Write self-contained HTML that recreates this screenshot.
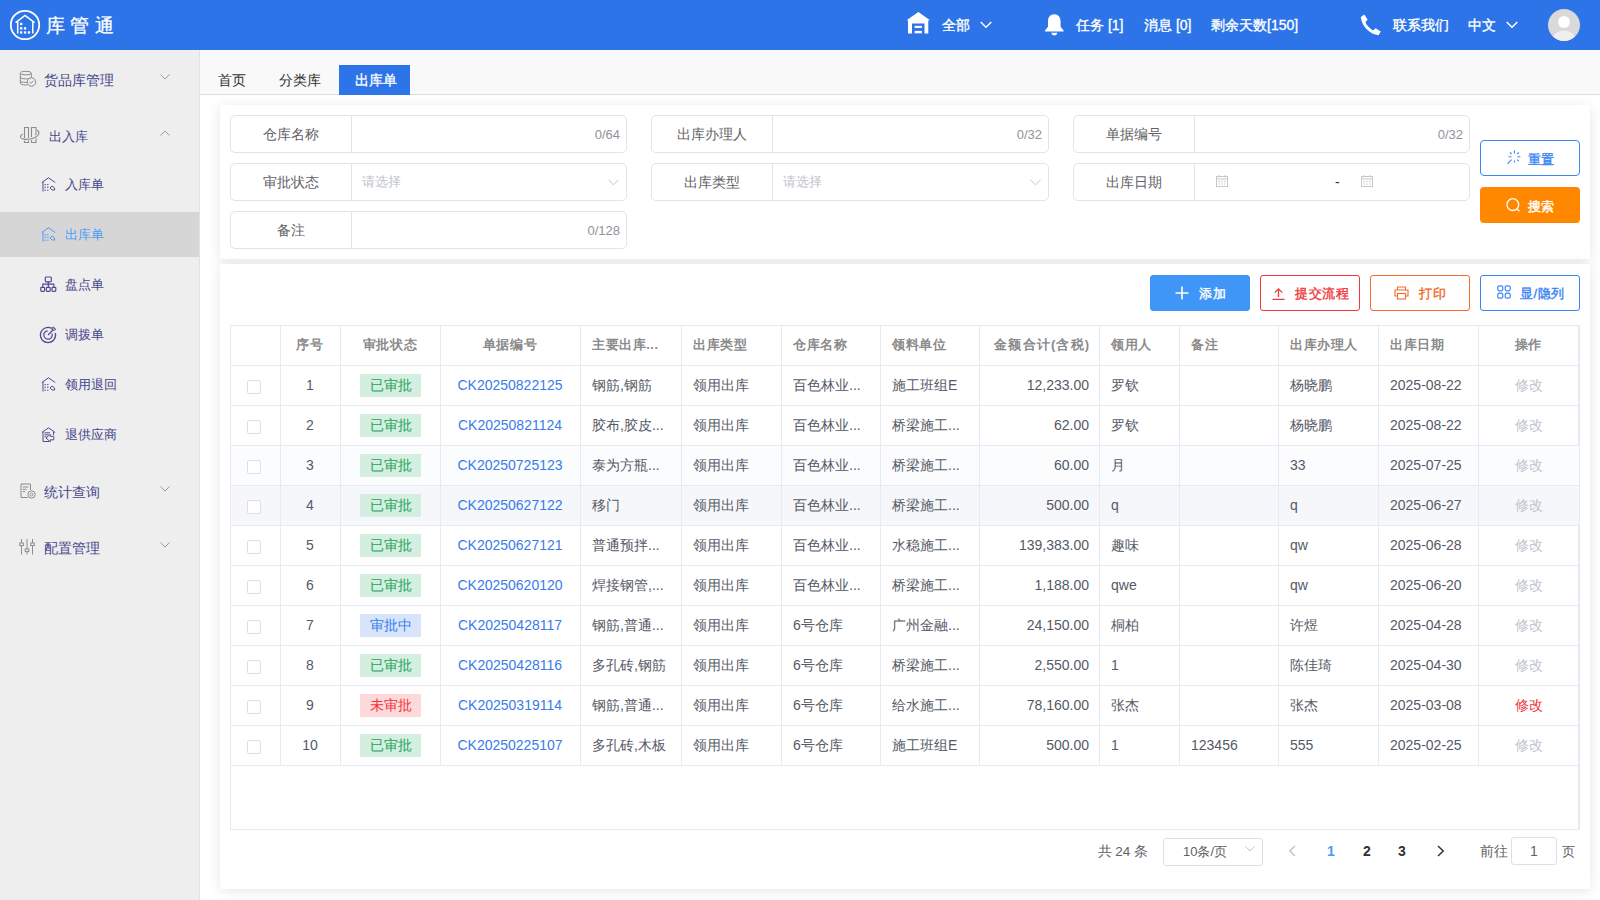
<!DOCTYPE html><html><head><meta charset="utf-8"><title>出库单</title><style>
*{box-sizing:border-box;margin:0;padding:0}
html,body{width:1600px;height:900px;overflow:hidden;background:#fff;font-family:"Liberation Sans",sans-serif;font-size:14px;color:#606266}
.a{position:absolute}
.t{position:absolute;white-space:nowrap}
svg{position:absolute;overflow:visible}
</style></head><body>
<div class="a" style="left:0;top:0;width:1600px;height:50px;background:#2d74e8"></div>
<svg style="left:0;top:0" width="130" height="50" viewBox="0 0 130 50">
<circle cx="25" cy="25" r="14.2" fill="none" stroke="#fff" stroke-width="1.8"/>
<path d="M15.6 22.6 L25 15.4 L34.6 22.6" fill="none" stroke="#fff" stroke-width="1.6" stroke-linejoin="miter"/>
<path d="M17.7 21.2 V33.6 M32.8 21.2 V33.6" fill="none" stroke="#fff" stroke-width="1.5"/>
<g fill="#fff"><rect x="20" y="22.8" width="2.3" height="2.3"/><rect x="20" y="27.2" width="2.3" height="2.3"/><rect x="23.9" y="27.2" width="2.3" height="2.3"/>
<rect x="20" y="31.3" width="2.3" height="2.3"/><rect x="23.9" y="31.3" width="2.3" height="2.3"/><rect x="27.8" y="31.3" width="2.3" height="2.3"/></g>
</svg>
<div class="t" style="left:45.5px;top:10.8px;height:30px;line-height:30px;font-size:19px;letter-spacing:5.8px;color:#fff;-webkit-text-stroke:0.3px #fff">库管通</div>
<svg style="left:902px;top:8px" width="32" height="32" viewBox="0 0 32 32">
<path d="M4.6 12.3 L16.4 4.1 L28.1 12.3 L26.3 12.3 V25.5 H22.5 V15.6 H10 V25.5 H6 V12.3 Z" fill="#fff"/>
<rect x="12.6" y="17.8" width="7.3" height="2.2" fill="#fff"/><rect x="12.6" y="22.9" width="7.3" height="2.4" fill="#fff"/>
</svg>
<div class="t" style="left:942px;color:#fff;font-size:14px;-webkit-text-stroke:0.35px #fff;height:50px;line-height:50px;top:0">全部</div>
<svg style="left:980px;top:21px" width="12" height="8" viewBox="0 0 12 8"><path d="M0.7 1 L6 6.3 L11.3 1" fill="none" stroke="#fff" stroke-width="1.5"/></svg>
<svg style="left:1044px;top:14px" width="21" height="22" viewBox="0 0 21 22">
<path d="M10.2 0.3 C6.3 0.3 4 3.4 4 7.3 V12.8 L1 16.4 V17.6 H19.6 V16.4 L16.6 12.8 V7.3 C16.6 3.4 14.2 0.3 10.2 0.3 Z" fill="#fff"/>
<path d="M7.3 18.8 C7.6 20.6 8.8 21.6 10.3 21.6 C11.8 21.6 13 20.6 13.3 18.8 Z" fill="#fff"/>
</svg>
<div class="t" style="left:1076px;color:#fff;font-size:14px;-webkit-text-stroke:0.35px #fff;height:50px;line-height:50px;top:0">任务 [1]</div>
<div class="t" style="left:1144px;color:#fff;font-size:14px;-webkit-text-stroke:0.35px #fff;height:50px;line-height:50px;top:0">消息 [0]</div>
<div class="t" style="left:1211px;color:#fff;font-size:14px;-webkit-text-stroke:0.35px #fff;height:50px;line-height:50px;top:0">剩余天数[150]</div>
<svg style="left:1360px;top:14px" width="22" height="22" viewBox="0 0 22 22">
<path d="M4.2 0.6 L7.6 5.6 L5.4 8.2 C6.8 11.4 9.6 14.6 13 16.4 L15.6 14.2 L20.8 17.6 L18.6 21.2 C10 20.6 1.6 12.2 0.8 3 Z" fill="#fff"/>
</svg>
<div class="t" style="left:1393px;color:#fff;font-size:14px;-webkit-text-stroke:0.35px #fff;height:50px;line-height:50px;top:0">联系我们</div>
<div class="t" style="left:1468px;color:#fff;font-size:14px;-webkit-text-stroke:0.35px #fff;height:50px;line-height:50px;top:0">中文</div>
<svg style="left:1506px;top:21px" width="12" height="8" viewBox="0 0 12 8"><path d="M0.7 1 L6 6.3 L11.3 1" fill="none" stroke="#fff" stroke-width="1.5"/></svg>
<svg style="left:1548px;top:9px" width="32" height="32" viewBox="0 0 32 32">
<defs><clipPath id="av"><circle cx="16" cy="16" r="16"/></clipPath></defs>
<circle cx="16" cy="16" r="16" fill="#d9d9d9"/>
<g clip-path="url(#av)"><circle cx="16" cy="13" r="6" fill="#fff"/><ellipse cx="16" cy="30.5" rx="11.5" ry="9" fill="#efefef"/></g>
</svg>
<div class="a" style="left:0;top:50px;width:200px;height:850px;background:#eeeeee;border-right:1px solid #e2e2e2"></div>
<div class="a" style="left:0;top:212px;width:199px;height:45px;background:#d6d6d6"></div>
<svg style="left:19px;top:71px" width="18" height="16" viewBox="0 0 18 16">
<g fill="none" stroke="#8c8c8c" stroke-width="1">
<ellipse cx="6.8" cy="2.1" rx="5.5" ry="1.8"/>
<path d="M1.3 2.1 V12.2 C1.3 13.3 3.6 14 6.8 14 H8.6"/><path d="M12.3 2.1 V6.6"/>
<path d="M1.3 6.1 C1.3 7.2 3.6 7.9 6.8 7.9 C8.8 7.9 10.6 7.5 11.6 7"/>
<path d="M1.3 9.9 C1.3 11 3.6 11.4 6.8 11.4 H8.3"/>
<circle cx="12.5" cy="11" r="4.2" fill="#eeeeee"/>
<path d="M10.6 11 L12 12.4 L14.5 9.7"/>
</g>
</svg>
<div class="t" style="left:44px;top:65.7px;height:30px;line-height:30px;font-size:13.7px;color:#45458c">货品库管理</div>
<svg style="left:160px;top:74px" width="10" height="6" viewBox="0 0 10 6"><path d="M0.5 0.5 L5 5 L9.5 0.5" fill="none" stroke="#9a9a9a" stroke-width="1"/></svg>
<svg style="left:19px;top:126px" width="22" height="18" viewBox="0 0 22 18">
<g fill="none" stroke="#8c8c8c" stroke-width="1.1">
<path d="M5.5 1.5 H9.5 V16.5 H5.5 Z"/><path d="M12.5 1.5 H17 V16.5 H12.5 Z"/>
</g>
<path d="M3.7 8 C1 9.3 0.8 11.5 3 12.6 C6 14 12 13.5 16 11.5 C20 9.5 22 6.5 17.3 3.7" fill="none" stroke="#eeeeee" stroke-width="2.6"/>
<path d="M3.7 8 C1 9.3 0.8 11.5 3 12.6 C6 14 12 13.5 16 11.5 C20 9.5 22 6.5 17.3 3.7" fill="none" stroke="#8c8c8c" stroke-width="1.1"/>
</svg>
<div class="t" style="left:49.3px;top:121.5px;height:30px;line-height:30px;font-size:13.4px;color:#45458c">出入库</div>
<svg style="left:160px;top:130px" width="10" height="6" viewBox="0 0 10 6"><path d="M0.5 5.5 L5 1 L9.5 5.5" fill="none" stroke="#9a9a9a" stroke-width="1"/></svg>
<svg style="left:41px;top:177px" width="16" height="16" viewBox="0 0 16 16"><g fill="none" stroke="#4f4d8f" stroke-width="1"><path d="M0.8 5.5 L7.5 0.8 L14.2 5.5"/><path d="M2 4.7 V14.5"/></g><g fill="#4f4d8f"><rect x="3.6" y="7" width="1.2" height="1.2"/><rect x="6.2" y="7" width="1.2" height="1.2"/><rect x="3.6" y="9.7" width="1.2" height="1.2"/><rect x="6.2" y="9.7" width="1.2" height="1.2"/><rect x="3.6" y="12.6" width="1.2" height="1.2"/><rect x="6.2" y="12.6" width="1.2" height="1.2"/></g><g fill="none" stroke="#4f4d8f" stroke-width="1"><path d="M9 11 L11 9 L13.6 11 L13.6 13 L11 13 Z"/></g></svg>
<div class="t" style="left:65px;top:170px;height:30px;line-height:30px;font-size:13.4px;color:#45458c">入库单</div>
<svg style="left:41px;top:227px" width="16" height="16" viewBox="0 0 16 16"><g fill="none" stroke="#4a9cf8" stroke-width="1"><path d="M0.8 5.5 L7.5 0.8 L14.2 5.5"/><path d="M2 4.7 V14.5"/></g><g fill="#4a9cf8"><rect x="3.6" y="7" width="1.2" height="1.2"/><rect x="6.2" y="7" width="1.2" height="1.2"/><rect x="3.6" y="9.7" width="1.2" height="1.2"/><rect x="6.2" y="9.7" width="1.2" height="1.2"/><rect x="3.6" y="12.6" width="1.2" height="1.2"/><rect x="6.2" y="12.6" width="1.2" height="1.2"/></g><g fill="none" stroke="#4a9cf8" stroke-width="1"><path d="M9 11 L11 9 L13.6 11 L13.6 13 L11 13 Z"/></g></svg>
<div class="t" style="left:65px;top:220px;height:30px;line-height:30px;font-size:13.4px;color:#4a9cf8">出库单</div>
<svg style="left:40px;top:276px" width="17" height="17" viewBox="0 0 17 17"><g fill="none" stroke="#4f4d8f" stroke-width="1.2">
<rect x="5.3" y="1" width="6" height="4.8" rx="0.8"/><path d="M8.3 5.8 V11 M2.8 11 V8.2 H13.8 V11"/>
<rect x="0.8" y="11.3" width="3.8" height="4" rx="0.8"/><rect x="6.4" y="11.3" width="3.8" height="4" rx="0.8"/><rect x="12" y="11.3" width="3.8" height="4" rx="0.8"/>
</g></svg>
<div class="t" style="left:65px;top:270px;height:30px;line-height:30px;font-size:13.4px;color:#45458c">盘点单</div>
<svg style="left:39px;top:327px" width="18" height="17" viewBox="0 0 18 17"><g fill="none" stroke="#4f4d8f" stroke-width="1.25">
<path d="M12.8 1.4 A7.6 7.6 0 1 0 16.34 6.03"/><path d="M8.63 3.82 A4.2 4.2 0 1 0 12.95 6.56"/><path d="M9 8 L14.2 2.8"/>
<path d="M13.3 0.6 L13.1 3 L15.6 3.2 L16.8 2 L15 1.8 L14.9 0 Z" stroke-width="1"/>
</g></svg>
<div class="t" style="left:65px;top:320px;height:30px;line-height:30px;font-size:13.4px;color:#45458c">调拨单</div>
<svg style="left:41px;top:377px" width="16" height="16" viewBox="0 0 16 16"><g fill="none" stroke="#4f4d8f" stroke-width="1"><path d="M0.8 5.5 L7.5 0.8 L14.2 5.5"/><path d="M2 4.7 V14.5"/></g><g fill="#4f4d8f"><rect x="3.6" y="7" width="1.2" height="1.2"/><rect x="6.2" y="7" width="1.2" height="1.2"/><rect x="3.6" y="9.7" width="1.2" height="1.2"/><rect x="6.2" y="9.7" width="1.2" height="1.2"/><rect x="3.6" y="12.6" width="1.2" height="1.2"/><rect x="6.2" y="12.6" width="1.2" height="1.2"/></g><g fill="none" stroke="#4f4d8f" stroke-width="1"><path d="M9 11 L11 9 L13.6 11 L13.6 13 L11 13 Z"/></g></svg>
<div class="t" style="left:65px;top:370px;height:30px;line-height:30px;font-size:13.4px;color:#45458c">领用退回</div>
<svg style="left:41px;top:427px" width="16" height="16" viewBox="0 0 16 16"><g fill="none" stroke="#4f4d8f" stroke-width="1"><path d="M0.8 5.5 L7.5 0.8 L14.2 5.5"/><path d="M2 4.7 V14.5"/><path d="M3.5 5.8 H9 M3.5 7.8 H7.5 M3.5 9.8 H5.5 M2 14.5 H8 M12.5 5 V8"/><path d="M5 11 L9.3 7.3 V9.3 H12.8 V12.8 H9.3 V14.8 Z"/></g></svg>
<div class="t" style="left:65px;top:420px;height:30px;line-height:30px;font-size:13.4px;color:#45458c">退供应商</div>
<svg style="left:20px;top:483px" width="16" height="16" viewBox="0 0 16 16"><g fill="none" stroke="#8c8c8c" stroke-width="1">
<path d="M10.5 1 H1 V14.5 H7.5"/><path d="M10.5 1 V7"/><path d="M2.8 4 H8.5 M2.8 6.3 H6.5 M2.8 8.6 H5"/>
</g><circle cx="11.5" cy="11.5" r="3.7" fill="none" stroke="#8c8c8c" stroke-width="1"/><circle cx="11.5" cy="11.5" r="1.5" fill="none" stroke="#8c8c8c" stroke-width="0.9"/></svg>
<div class="t" style="left:44.3px;top:477.7px;height:30px;line-height:30px;font-size:13.7px;color:#45458c">统计查询</div>
<svg style="left:160px;top:486px" width="10" height="6" viewBox="0 0 10 6"><path d="M0.5 0.5 L5 5 L9.5 0.5" fill="none" stroke="#9a9a9a" stroke-width="1"/></svg>
<svg style="left:19px;top:539px" width="17" height="16" viewBox="0 0 17 16"><g fill="none" stroke="#8c8c8c" stroke-width="1">
<path d="M2.5 0 V15.5 M8 0 V15.5 M13.5 0 V15.5"/>
<rect x="0.8" y="4" width="3.6" height="2.6" fill="#eee"/><rect x="6.2" y="10" width="3.6" height="2.6" fill="#eee"/><rect x="11.7" y="4" width="3.6" height="2.6" fill="#eee"/>
</g></svg>
<div class="t" style="left:44.3px;top:533.7px;height:30px;line-height:30px;font-size:13.7px;color:#45458c">配置管理</div>
<svg style="left:160px;top:542px" width="10" height="6" viewBox="0 0 10 6"><path d="M0.5 0.5 L5 5 L9.5 0.5" fill="none" stroke="#9a9a9a" stroke-width="1"/></svg>
<div class="a" style="left:200px;top:50px;width:1400px;height:45px;background:#f9f9f9;border-bottom:1px solid #dedede"></div>
<div class="t" style="left:217.7px;top:65.7px;height:30px;line-height:30px;font-size:13.7px;color:#303133">首页</div>
<div class="t" style="left:279px;top:65.7px;height:30px;line-height:30px;font-size:13.7px;color:#303133">分类库</div>
<div class="a" style="left:339px;top:65px;width:71px;height:30px;background:#2d74e8"></div>
<div class="t" style="left:355px;top:65.8px;height:30px;line-height:30px;font-size:13.7px;color:#fff;-webkit-text-stroke:0.3px #fff">出库单</div>
<div class="a" style="left:220px;top:105px;width:1370px;height:154px;background:#fff;box-shadow:0 2px 12px rgba(0,0,0,0.10)"></div>
<div class="a" style="left:220px;top:264px;width:1370px;height:625px;background:#fff;box-shadow:0 2px 12px rgba(0,0,0,0.10)"></div>
<div class="a" style="left:230px;top:115px;width:397px;height:38px;border:1px solid #e3e4e8;border-radius:5px"></div>
<div class="a" style="left:351px;top:115px;width:1px;height:38px;background:#e3e4e8"></div>
<div class="t" style="left:230px;top:115px;width:121px;height:38px;line-height:38px;text-align:center;color:#606266">仓库名称</div>
<div class="t" style="left:351px;top:116px;width:269px;height:38px;line-height:38px;text-align:right;color:#909399;font-size:13px">0/64</div>
<div class="a" style="left:651px;top:115px;width:398px;height:38px;border:1px solid #e3e4e8;border-radius:5px"></div>
<div class="a" style="left:772px;top:115px;width:1px;height:38px;background:#e3e4e8"></div>
<div class="t" style="left:651px;top:115px;width:121px;height:38px;line-height:38px;text-align:center;color:#606266">出库办理人</div>
<div class="t" style="left:772px;top:116px;width:270px;height:38px;line-height:38px;text-align:right;color:#909399;font-size:13px">0/32</div>
<div class="a" style="left:1073px;top:115px;width:397px;height:38px;border:1px solid #e3e4e8;border-radius:5px"></div>
<div class="a" style="left:1194px;top:115px;width:1px;height:38px;background:#e3e4e8"></div>
<div class="t" style="left:1073px;top:115px;width:121px;height:38px;line-height:38px;text-align:center;color:#606266">单据编号</div>
<div class="t" style="left:1194px;top:116px;width:269px;height:38px;line-height:38px;text-align:right;color:#909399;font-size:13px">0/32</div>
<div class="a" style="left:230px;top:163px;width:397px;height:38px;border:1px solid #e3e4e8;border-radius:5px"></div>
<div class="a" style="left:351px;top:163px;width:1px;height:38px;background:#e3e4e8"></div>
<div class="t" style="left:230px;top:163px;width:121px;height:38px;line-height:38px;text-align:center;color:#606266">审批状态</div>
<div class="t" style="left:362px;top:163px;height:38px;line-height:38px;color:#c0c4cc;font-size:13px">请选择</div>
<svg style="left:608px;top:179px" width="11" height="7" viewBox="0 0 11 7"><path d="M0.5 0.8 L5.5 5.8 L10.5 0.8" fill="none" stroke="#c0c4cc" stroke-width="1"/></svg>
<div class="a" style="left:651px;top:163px;width:398px;height:38px;border:1px solid #e3e4e8;border-radius:5px"></div>
<div class="a" style="left:772px;top:163px;width:1px;height:38px;background:#e3e4e8"></div>
<div class="t" style="left:651px;top:163px;width:121px;height:38px;line-height:38px;text-align:center;color:#606266">出库类型</div>
<div class="t" style="left:783px;top:163px;height:38px;line-height:38px;color:#c0c4cc;font-size:13px">请选择</div>
<svg style="left:1030px;top:179px" width="11" height="7" viewBox="0 0 11 7"><path d="M0.5 0.8 L5.5 5.8 L10.5 0.8" fill="none" stroke="#c0c4cc" stroke-width="1"/></svg>
<div class="a" style="left:1073px;top:163px;width:397px;height:38px;border:1px solid #e3e4e8;border-radius:5px"></div>
<div class="a" style="left:1194px;top:163px;width:1px;height:38px;background:#e3e4e8"></div>
<div class="t" style="left:1073px;top:163px;width:121px;height:38px;line-height:38px;text-align:center;color:#606266">出库日期</div>
<svg style="left:1216px;top:175px" width="12" height="12" viewBox="0 0 12 12"><g fill="none" stroke="#c8c8c8" stroke-width="1">
<rect x="0.5" y="1.5" width="11" height="10"/><path d="M0.5 4 H11.5 M3 0 V2.5 M9 0 V2.5"/></g><g fill="#c8c8c8"><rect x="2.5" y="6" width="1.5" height="1"/><rect x="5.25" y="6" width="1.5" height="1"/><rect x="8" y="6" width="1.5" height="1"/><rect x="2.5" y="8.5" width="1.5" height="1"/><rect x="5.25" y="8.5" width="1.5" height="1"/><rect x="8" y="8.5" width="1.5" height="1"/></g></svg>
<svg style="left:1361px;top:175px" width="12" height="12" viewBox="0 0 12 12"><g fill="none" stroke="#c8c8c8" stroke-width="1">
<rect x="0.5" y="1.5" width="11" height="10"/><path d="M0.5 4 H11.5 M3 0 V2.5 M9 0 V2.5"/></g><g fill="#c8c8c8"><rect x="2.5" y="6" width="1.5" height="1"/><rect x="5.25" y="6" width="1.5" height="1"/><rect x="8" y="6" width="1.5" height="1"/><rect x="2.5" y="8.5" width="1.5" height="1"/><rect x="5.25" y="8.5" width="1.5" height="1"/><rect x="8" y="8.5" width="1.5" height="1"/></g></svg>
<div class="t" style="left:1335px;top:163px;height:38px;line-height:38px;color:#303133">-</div>
<div class="a" style="left:230px;top:211px;width:397px;height:38px;border:1px solid #e3e4e8;border-radius:5px"></div>
<div class="a" style="left:351px;top:211px;width:1px;height:38px;background:#e3e4e8"></div>
<div class="t" style="left:230px;top:211px;width:121px;height:38px;line-height:38px;text-align:center;color:#606266">备注</div>
<div class="t" style="left:351px;top:212px;width:269px;height:38px;line-height:38px;text-align:right;color:#909399;font-size:13px">0/128</div>
<div class="a" style="left:1480px;top:140px;width:100px;height:36px;border:1px solid #3a86f5;border-radius:4px;background:#fff"></div>
<svg style="left:1507px;top:150px" width="14" height="15" viewBox="0 0 14 15"><g stroke="#3a86f5" stroke-width="1.1" stroke-linecap="butt">
<path d="M7.4 0.6 V3.6 M7.4 10.4 V12.6 M1.4 6.8 H4.4 M10.4 6.8 H13.4 M4.6 4 L3 2.4 M10.2 4 L11.8 2.4 M10.2 9.6 L11.8 11.2 M4.6 9.6 L0.4 13.8"/></g></svg>
<div class="t" style="left:1527.5px;top:141.5px;height:36px;line-height:36px;font-size:13px;letter-spacing:0.55px;color:#3a86f5;-webkit-text-stroke:0.4px #3a86f5">重置</div>
<div class="a" style="left:1480px;top:187px;width:100px;height:36px;border-radius:4px;background:#ff8800"></div>
<svg style="left:1506px;top:198px" width="15" height="15" viewBox="0 0 15 15"><g fill="none" stroke="#fff" stroke-width="1.3">
<circle cx="6.8" cy="6.6" r="5.9"/><path d="M10.9 10.7 L13.4 13.2"/></g></svg>
<div class="t" style="left:1527.5px;top:188.5px;height:36px;line-height:36px;font-size:13px;letter-spacing:0.55px;color:#fff;-webkit-text-stroke:0.4px #fff">搜索</div>
<div class="a" style="left:1150px;top:275px;width:100px;height:36px;border:1px solid #4096f6;border-radius:3px;background:#4096f6"></div>
<svg style="left:1175px;top:286px" width="14" height="14" viewBox="0 0 14 14"><path d="M7 0.5 V13.5 M0.5 7 H13.5" stroke="#fff" stroke-width="1.6"/></svg>
<div class="t" style="left:1199px;top:276px;height:36px;line-height:36px;font-size:13px;letter-spacing:0.55px;color:#fff;-webkit-text-stroke:0.4px #fff">添加</div>
<div class="a" style="left:1260px;top:275px;width:100px;height:36px;border:1px solid #ee3a3d;border-radius:3px;background:#fff"></div>
<svg style="left:1272px;top:287px" width="13" height="13" viewBox="0 0 13 13"><g fill="none" stroke="#ee3a3d" stroke-width="1.3"><path d="M6.5 2 V10 M2.8 5.6 L6.5 1.9 L10.2 5.6 M0.5 12.3 H12.5"/></g></svg>
<div class="t" style="left:1295px;top:276px;height:36px;line-height:36px;font-size:13px;letter-spacing:0.55px;color:#ee3a3d;-webkit-text-stroke:0.4px #ee3a3d">提交流程</div>
<div class="a" style="left:1370px;top:275px;width:100px;height:36px;border:1px solid #f26b2b;border-radius:3px;background:#fff"></div>
<svg style="left:1394px;top:286px" width="15" height="14" viewBox="0 0 15 14"><g fill="none" stroke="#f26b2b" stroke-width="1.1"><path d="M3.5 4 V1 H11.5 V4"/><path d="M3.5 10 H1 V4 H14 V10 H11.5"/><rect x="3.5" y="7.5" width="8" height="5.5"/></g></svg>
<div class="t" style="left:1419px;top:276px;height:36px;line-height:36px;font-size:13px;letter-spacing:0.55px;color:#f26b2b;-webkit-text-stroke:0.4px #f26b2b">打印</div>
<div class="a" style="left:1480px;top:275px;width:100px;height:36px;border:1px solid #3a85f4;border-radius:3px;background:#fff"></div>
<svg style="left:1497px;top:285px" width="14" height="14" viewBox="0 0 14 14"><g fill="none" stroke="#3a85f4" stroke-width="1.2"><rect x="0.8" y="0.8" width="5" height="5" rx="1.5"/><rect x="8.2" y="0.8" width="5" height="5" rx="1.5"/><rect x="0.8" y="8.2" width="5" height="5" rx="1.5"/><rect x="8.2" y="8.2" width="5" height="5" rx="1.5"/></g></svg>
<div class="t" style="left:1520px;top:276px;height:36px;line-height:36px;font-size:13px;letter-spacing:0.55px;color:#3a85f4;-webkit-text-stroke:0.4px #3a85f4">显/隐列</div>
<div class="a" style="left:230px;top:325px;width:1350px;height:505px;border:1px solid #e8eaf3;border-right-width:2px"></div>
<div class="a" style="left:231px;top:446px;width:1348px;height:39px;background:#fbfcfe"></div>
<div class="a" style="left:231px;top:486px;width:1348px;height:39px;background:#f5f7fb"></div>
<div class="a" style="left:280px;top:325px;width:1px;height:440px;background:#e8eaf3"></div>
<div class="a" style="left:340px;top:325px;width:1px;height:440px;background:#e8eaf3"></div>
<div class="a" style="left:440px;top:325px;width:1px;height:440px;background:#e8eaf3"></div>
<div class="a" style="left:580px;top:325px;width:1px;height:440px;background:#e8eaf3"></div>
<div class="a" style="left:681px;top:325px;width:1px;height:440px;background:#e8eaf3"></div>
<div class="a" style="left:781px;top:325px;width:1px;height:440px;background:#e8eaf3"></div>
<div class="a" style="left:880px;top:325px;width:1px;height:440px;background:#e8eaf3"></div>
<div class="a" style="left:979px;top:325px;width:1px;height:440px;background:#e8eaf3"></div>
<div class="a" style="left:1099px;top:325px;width:1px;height:440px;background:#e8eaf3"></div>
<div class="a" style="left:1179px;top:325px;width:1px;height:440px;background:#e8eaf3"></div>
<div class="a" style="left:1278px;top:325px;width:1px;height:440px;background:#e8eaf3"></div>
<div class="a" style="left:1378px;top:325px;width:1px;height:440px;background:#e8eaf3"></div>
<div class="a" style="left:1478px;top:325px;width:1px;height:440px;background:#e8eaf3"></div>
<div class="a" style="left:230px;top:365px;width:1350px;height:1px;background:#e8eaf3"></div>
<div class="a" style="left:230px;top:405px;width:1350px;height:1px;background:#e8eaf3"></div>
<div class="a" style="left:230px;top:445px;width:1350px;height:1px;background:#e8eaf3"></div>
<div class="a" style="left:230px;top:485px;width:1350px;height:1px;background:#e8eaf3"></div>
<div class="a" style="left:230px;top:525px;width:1350px;height:1px;background:#e8eaf3"></div>
<div class="a" style="left:230px;top:565px;width:1350px;height:1px;background:#e8eaf3"></div>
<div class="a" style="left:230px;top:605px;width:1350px;height:1px;background:#e8eaf3"></div>
<div class="a" style="left:230px;top:645px;width:1350px;height:1px;background:#e8eaf3"></div>
<div class="a" style="left:230px;top:685px;width:1350px;height:1px;background:#e8eaf3"></div>
<div class="a" style="left:230px;top:725px;width:1350px;height:1px;background:#e8eaf3"></div>
<div class="a" style="left:230px;top:765px;width:1350px;height:1px;background:#e8eaf3"></div>
<div class="t" style="left:280px;top:325px;width:60px;height:40px;line-height:40px;text-align:center;color:#8a8a8a;font-weight:bold;font-size:13px;letter-spacing:0.55px">序号</div>
<div class="t" style="left:340px;top:325px;width:100px;height:40px;line-height:40px;text-align:center;color:#8a8a8a;font-weight:bold;font-size:13px;letter-spacing:0.55px">审批状态</div>
<div class="t" style="left:440px;top:325px;width:140px;height:40px;line-height:40px;text-align:center;color:#8a8a8a;font-weight:bold;font-size:13px;letter-spacing:0.55px">单据编号</div>
<div class="t" style="left:592px;top:325px;height:40px;line-height:40px;color:#8a8a8a;font-weight:bold;font-size:13px;letter-spacing:0.55px">主要出库...</div>
<div class="t" style="left:693px;top:325px;height:40px;line-height:40px;color:#8a8a8a;font-weight:bold;font-size:13px;letter-spacing:0.55px">出库类型</div>
<div class="t" style="left:793px;top:325px;height:40px;line-height:40px;color:#8a8a8a;font-weight:bold;font-size:13px;letter-spacing:0.55px">仓库名称</div>
<div class="t" style="left:892px;top:325px;height:40px;line-height:40px;color:#8a8a8a;font-weight:bold;font-size:13px;letter-spacing:0.55px">领料单位</div>
<div class="t" style="left:979px;top:325px;width:111.15px;height:40px;line-height:40px;text-align:right;color:#8a8a8a;font-weight:bold;font-size:13px;letter-spacing:1.15px">金额合计(含税)</div>
<div class="t" style="left:1111px;top:325px;height:40px;line-height:40px;color:#8a8a8a;font-weight:bold;font-size:13px;letter-spacing:0.55px">领用人</div>
<div class="t" style="left:1191px;top:325px;height:40px;line-height:40px;color:#8a8a8a;font-weight:bold;font-size:13px;letter-spacing:0.55px">备注</div>
<div class="t" style="left:1290px;top:325px;height:40px;line-height:40px;color:#8a8a8a;font-weight:bold;font-size:13px;letter-spacing:0.55px">出库办理人</div>
<div class="t" style="left:1390px;top:325px;height:40px;line-height:40px;color:#8a8a8a;font-weight:bold;font-size:13px;letter-spacing:0.55px">出库日期</div>
<div class="t" style="left:1478px;top:325px;width:101px;height:40px;line-height:40px;text-align:center;color:#8a8a8a;font-weight:bold;font-size:13px;letter-spacing:0.55px">操作</div>
<div class="a" style="left:247px;top:380px;width:14px;height:14px;border:1px solid #dcdfe6;border-radius:2px;background:#fff"></div>
<div class="t" style="left:280px;top:366px;width:60px;height:39px;line-height:39px;text-align:center;color:#555a66;font-weight:normal;font-size:14px;letter-spacing:0px">1</div>
<div class="a" style="left:360px;top:374px;width:61px;height:23px;background:#d4eedf"></div>
<div class="t" style="left:360px;top:374px;width:61px;height:23px;line-height:23px;text-align:center;color:#23a35a">已审批</div>
<div class="t" style="left:440px;top:366px;width:140px;height:39px;line-height:39px;text-align:center;color:#3a7bea;font-weight:normal;font-size:14px;letter-spacing:0px">CK20250822125</div>
<div class="t" style="left:592px;top:366px;height:39px;line-height:39px;color:#555a66;font-weight:normal;font-size:14px;letter-spacing:0px">钢筋,钢筋</div>
<div class="t" style="left:693px;top:366px;height:39px;line-height:39px;color:#555a66;font-weight:normal;font-size:14px;letter-spacing:0px">领用出库</div>
<div class="t" style="left:793px;top:366px;height:39px;line-height:39px;color:#555a66;font-weight:normal;font-size:14px;letter-spacing:0px">百色林业...</div>
<div class="t" style="left:892px;top:366px;height:39px;line-height:39px;color:#555a66;font-weight:normal;font-size:14px;letter-spacing:0px">施工班组E</div>
<div class="t" style="left:979px;top:366px;width:110px;height:39px;line-height:39px;text-align:right;color:#555a66;font-weight:normal;font-size:14px;letter-spacing:0px">12,233.00</div>
<div class="t" style="left:1111px;top:366px;height:39px;line-height:39px;color:#555a66;font-weight:normal;font-size:14px;letter-spacing:0px">罗钦</div>
<div class="t" style="left:1191px;top:366px;height:39px;line-height:39px;color:#555a66;font-weight:normal;font-size:14px;letter-spacing:0px"></div>
<div class="t" style="left:1290px;top:366px;height:39px;line-height:39px;color:#555a66;font-weight:normal;font-size:14px;letter-spacing:0px">杨晓鹏</div>
<div class="t" style="left:1390px;top:366px;height:39px;line-height:39px;color:#555a66;font-weight:normal;font-size:14px;letter-spacing:0px">2025-08-22</div>
<div class="t" style="left:1478px;top:366px;width:101px;height:39px;line-height:39px;text-align:center;color:#c0c4cc;font-weight:normal;font-size:14px;letter-spacing:0px">修改</div>
<div class="a" style="left:247px;top:420px;width:14px;height:14px;border:1px solid #dcdfe6;border-radius:2px;background:#fff"></div>
<div class="t" style="left:280px;top:406px;width:60px;height:39px;line-height:39px;text-align:center;color:#555a66;font-weight:normal;font-size:14px;letter-spacing:0px">2</div>
<div class="a" style="left:360px;top:414px;width:61px;height:23px;background:#d4eedf"></div>
<div class="t" style="left:360px;top:414px;width:61px;height:23px;line-height:23px;text-align:center;color:#23a35a">已审批</div>
<div class="t" style="left:440px;top:406px;width:140px;height:39px;line-height:39px;text-align:center;color:#3a7bea;font-weight:normal;font-size:14px;letter-spacing:0px">CK20250821124</div>
<div class="t" style="left:592px;top:406px;height:39px;line-height:39px;color:#555a66;font-weight:normal;font-size:14px;letter-spacing:0px">胶布,胶皮...</div>
<div class="t" style="left:693px;top:406px;height:39px;line-height:39px;color:#555a66;font-weight:normal;font-size:14px;letter-spacing:0px">领用出库</div>
<div class="t" style="left:793px;top:406px;height:39px;line-height:39px;color:#555a66;font-weight:normal;font-size:14px;letter-spacing:0px">百色林业...</div>
<div class="t" style="left:892px;top:406px;height:39px;line-height:39px;color:#555a66;font-weight:normal;font-size:14px;letter-spacing:0px">桥梁施工...</div>
<div class="t" style="left:979px;top:406px;width:110px;height:39px;line-height:39px;text-align:right;color:#555a66;font-weight:normal;font-size:14px;letter-spacing:0px">62.00</div>
<div class="t" style="left:1111px;top:406px;height:39px;line-height:39px;color:#555a66;font-weight:normal;font-size:14px;letter-spacing:0px">罗钦</div>
<div class="t" style="left:1191px;top:406px;height:39px;line-height:39px;color:#555a66;font-weight:normal;font-size:14px;letter-spacing:0px"></div>
<div class="t" style="left:1290px;top:406px;height:39px;line-height:39px;color:#555a66;font-weight:normal;font-size:14px;letter-spacing:0px">杨晓鹏</div>
<div class="t" style="left:1390px;top:406px;height:39px;line-height:39px;color:#555a66;font-weight:normal;font-size:14px;letter-spacing:0px">2025-08-22</div>
<div class="t" style="left:1478px;top:406px;width:101px;height:39px;line-height:39px;text-align:center;color:#c0c4cc;font-weight:normal;font-size:14px;letter-spacing:0px">修改</div>
<div class="a" style="left:247px;top:460px;width:14px;height:14px;border:1px solid #dcdfe6;border-radius:2px;background:#fff"></div>
<div class="t" style="left:280px;top:446px;width:60px;height:39px;line-height:39px;text-align:center;color:#555a66;font-weight:normal;font-size:14px;letter-spacing:0px">3</div>
<div class="a" style="left:360px;top:454px;width:61px;height:23px;background:#d4eedf"></div>
<div class="t" style="left:360px;top:454px;width:61px;height:23px;line-height:23px;text-align:center;color:#23a35a">已审批</div>
<div class="t" style="left:440px;top:446px;width:140px;height:39px;line-height:39px;text-align:center;color:#3a7bea;font-weight:normal;font-size:14px;letter-spacing:0px">CK20250725123</div>
<div class="t" style="left:592px;top:446px;height:39px;line-height:39px;color:#555a66;font-weight:normal;font-size:14px;letter-spacing:0px">泰为方瓶...</div>
<div class="t" style="left:693px;top:446px;height:39px;line-height:39px;color:#555a66;font-weight:normal;font-size:14px;letter-spacing:0px">领用出库</div>
<div class="t" style="left:793px;top:446px;height:39px;line-height:39px;color:#555a66;font-weight:normal;font-size:14px;letter-spacing:0px">百色林业...</div>
<div class="t" style="left:892px;top:446px;height:39px;line-height:39px;color:#555a66;font-weight:normal;font-size:14px;letter-spacing:0px">桥梁施工...</div>
<div class="t" style="left:979px;top:446px;width:110px;height:39px;line-height:39px;text-align:right;color:#555a66;font-weight:normal;font-size:14px;letter-spacing:0px">60.00</div>
<div class="t" style="left:1111px;top:446px;height:39px;line-height:39px;color:#555a66;font-weight:normal;font-size:14px;letter-spacing:0px">月</div>
<div class="t" style="left:1191px;top:446px;height:39px;line-height:39px;color:#555a66;font-weight:normal;font-size:14px;letter-spacing:0px"></div>
<div class="t" style="left:1290px;top:446px;height:39px;line-height:39px;color:#555a66;font-weight:normal;font-size:14px;letter-spacing:0px">33</div>
<div class="t" style="left:1390px;top:446px;height:39px;line-height:39px;color:#555a66;font-weight:normal;font-size:14px;letter-spacing:0px">2025-07-25</div>
<div class="t" style="left:1478px;top:446px;width:101px;height:39px;line-height:39px;text-align:center;color:#c0c4cc;font-weight:normal;font-size:14px;letter-spacing:0px">修改</div>
<div class="a" style="left:247px;top:500px;width:14px;height:14px;border:1px solid #dcdfe6;border-radius:2px;background:#fff"></div>
<div class="t" style="left:280px;top:486px;width:60px;height:39px;line-height:39px;text-align:center;color:#555a66;font-weight:normal;font-size:14px;letter-spacing:0px">4</div>
<div class="a" style="left:360px;top:494px;width:61px;height:23px;background:#d4eedf"></div>
<div class="t" style="left:360px;top:494px;width:61px;height:23px;line-height:23px;text-align:center;color:#23a35a">已审批</div>
<div class="t" style="left:440px;top:486px;width:140px;height:39px;line-height:39px;text-align:center;color:#3a7bea;font-weight:normal;font-size:14px;letter-spacing:0px">CK20250627122</div>
<div class="t" style="left:592px;top:486px;height:39px;line-height:39px;color:#555a66;font-weight:normal;font-size:14px;letter-spacing:0px">移门</div>
<div class="t" style="left:693px;top:486px;height:39px;line-height:39px;color:#555a66;font-weight:normal;font-size:14px;letter-spacing:0px">领用出库</div>
<div class="t" style="left:793px;top:486px;height:39px;line-height:39px;color:#555a66;font-weight:normal;font-size:14px;letter-spacing:0px">百色林业...</div>
<div class="t" style="left:892px;top:486px;height:39px;line-height:39px;color:#555a66;font-weight:normal;font-size:14px;letter-spacing:0px">桥梁施工...</div>
<div class="t" style="left:979px;top:486px;width:110px;height:39px;line-height:39px;text-align:right;color:#555a66;font-weight:normal;font-size:14px;letter-spacing:0px">500.00</div>
<div class="t" style="left:1111px;top:486px;height:39px;line-height:39px;color:#555a66;font-weight:normal;font-size:14px;letter-spacing:0px">q</div>
<div class="t" style="left:1191px;top:486px;height:39px;line-height:39px;color:#555a66;font-weight:normal;font-size:14px;letter-spacing:0px"></div>
<div class="t" style="left:1290px;top:486px;height:39px;line-height:39px;color:#555a66;font-weight:normal;font-size:14px;letter-spacing:0px">q</div>
<div class="t" style="left:1390px;top:486px;height:39px;line-height:39px;color:#555a66;font-weight:normal;font-size:14px;letter-spacing:0px">2025-06-27</div>
<div class="t" style="left:1478px;top:486px;width:101px;height:39px;line-height:39px;text-align:center;color:#c0c4cc;font-weight:normal;font-size:14px;letter-spacing:0px">修改</div>
<div class="a" style="left:247px;top:540px;width:14px;height:14px;border:1px solid #dcdfe6;border-radius:2px;background:#fff"></div>
<div class="t" style="left:280px;top:526px;width:60px;height:39px;line-height:39px;text-align:center;color:#555a66;font-weight:normal;font-size:14px;letter-spacing:0px">5</div>
<div class="a" style="left:360px;top:534px;width:61px;height:23px;background:#d4eedf"></div>
<div class="t" style="left:360px;top:534px;width:61px;height:23px;line-height:23px;text-align:center;color:#23a35a">已审批</div>
<div class="t" style="left:440px;top:526px;width:140px;height:39px;line-height:39px;text-align:center;color:#3a7bea;font-weight:normal;font-size:14px;letter-spacing:0px">CK20250627121</div>
<div class="t" style="left:592px;top:526px;height:39px;line-height:39px;color:#555a66;font-weight:normal;font-size:14px;letter-spacing:0px">普通预拌...</div>
<div class="t" style="left:693px;top:526px;height:39px;line-height:39px;color:#555a66;font-weight:normal;font-size:14px;letter-spacing:0px">领用出库</div>
<div class="t" style="left:793px;top:526px;height:39px;line-height:39px;color:#555a66;font-weight:normal;font-size:14px;letter-spacing:0px">百色林业...</div>
<div class="t" style="left:892px;top:526px;height:39px;line-height:39px;color:#555a66;font-weight:normal;font-size:14px;letter-spacing:0px">水稳施工...</div>
<div class="t" style="left:979px;top:526px;width:110px;height:39px;line-height:39px;text-align:right;color:#555a66;font-weight:normal;font-size:14px;letter-spacing:0px">139,383.00</div>
<div class="t" style="left:1111px;top:526px;height:39px;line-height:39px;color:#555a66;font-weight:normal;font-size:14px;letter-spacing:0px">趣味</div>
<div class="t" style="left:1191px;top:526px;height:39px;line-height:39px;color:#555a66;font-weight:normal;font-size:14px;letter-spacing:0px"></div>
<div class="t" style="left:1290px;top:526px;height:39px;line-height:39px;color:#555a66;font-weight:normal;font-size:14px;letter-spacing:0px">qw</div>
<div class="t" style="left:1390px;top:526px;height:39px;line-height:39px;color:#555a66;font-weight:normal;font-size:14px;letter-spacing:0px">2025-06-28</div>
<div class="t" style="left:1478px;top:526px;width:101px;height:39px;line-height:39px;text-align:center;color:#c0c4cc;font-weight:normal;font-size:14px;letter-spacing:0px">修改</div>
<div class="a" style="left:247px;top:580px;width:14px;height:14px;border:1px solid #dcdfe6;border-radius:2px;background:#fff"></div>
<div class="t" style="left:280px;top:566px;width:60px;height:39px;line-height:39px;text-align:center;color:#555a66;font-weight:normal;font-size:14px;letter-spacing:0px">6</div>
<div class="a" style="left:360px;top:574px;width:61px;height:23px;background:#d4eedf"></div>
<div class="t" style="left:360px;top:574px;width:61px;height:23px;line-height:23px;text-align:center;color:#23a35a">已审批</div>
<div class="t" style="left:440px;top:566px;width:140px;height:39px;line-height:39px;text-align:center;color:#3a7bea;font-weight:normal;font-size:14px;letter-spacing:0px">CK20250620120</div>
<div class="t" style="left:592px;top:566px;height:39px;line-height:39px;color:#555a66;font-weight:normal;font-size:14px;letter-spacing:0px">焊接钢管,...</div>
<div class="t" style="left:693px;top:566px;height:39px;line-height:39px;color:#555a66;font-weight:normal;font-size:14px;letter-spacing:0px">领用出库</div>
<div class="t" style="left:793px;top:566px;height:39px;line-height:39px;color:#555a66;font-weight:normal;font-size:14px;letter-spacing:0px">百色林业...</div>
<div class="t" style="left:892px;top:566px;height:39px;line-height:39px;color:#555a66;font-weight:normal;font-size:14px;letter-spacing:0px">桥梁施工...</div>
<div class="t" style="left:979px;top:566px;width:110px;height:39px;line-height:39px;text-align:right;color:#555a66;font-weight:normal;font-size:14px;letter-spacing:0px">1,188.00</div>
<div class="t" style="left:1111px;top:566px;height:39px;line-height:39px;color:#555a66;font-weight:normal;font-size:14px;letter-spacing:0px">qwe</div>
<div class="t" style="left:1191px;top:566px;height:39px;line-height:39px;color:#555a66;font-weight:normal;font-size:14px;letter-spacing:0px"></div>
<div class="t" style="left:1290px;top:566px;height:39px;line-height:39px;color:#555a66;font-weight:normal;font-size:14px;letter-spacing:0px">qw</div>
<div class="t" style="left:1390px;top:566px;height:39px;line-height:39px;color:#555a66;font-weight:normal;font-size:14px;letter-spacing:0px">2025-06-20</div>
<div class="t" style="left:1478px;top:566px;width:101px;height:39px;line-height:39px;text-align:center;color:#c0c4cc;font-weight:normal;font-size:14px;letter-spacing:0px">修改</div>
<div class="a" style="left:247px;top:620px;width:14px;height:14px;border:1px solid #dcdfe6;border-radius:2px;background:#fff"></div>
<div class="t" style="left:280px;top:606px;width:60px;height:39px;line-height:39px;text-align:center;color:#555a66;font-weight:normal;font-size:14px;letter-spacing:0px">7</div>
<div class="a" style="left:360px;top:614px;width:61px;height:23px;background:#d7e4fa"></div>
<div class="t" style="left:360px;top:614px;width:61px;height:23px;line-height:23px;text-align:center;color:#3a7cf0">审批中</div>
<div class="t" style="left:440px;top:606px;width:140px;height:39px;line-height:39px;text-align:center;color:#3a7bea;font-weight:normal;font-size:14px;letter-spacing:0px">CK20250428117</div>
<div class="t" style="left:592px;top:606px;height:39px;line-height:39px;color:#555a66;font-weight:normal;font-size:14px;letter-spacing:0px">钢筋,普通...</div>
<div class="t" style="left:693px;top:606px;height:39px;line-height:39px;color:#555a66;font-weight:normal;font-size:14px;letter-spacing:0px">领用出库</div>
<div class="t" style="left:793px;top:606px;height:39px;line-height:39px;color:#555a66;font-weight:normal;font-size:14px;letter-spacing:0px">6号仓库</div>
<div class="t" style="left:892px;top:606px;height:39px;line-height:39px;color:#555a66;font-weight:normal;font-size:14px;letter-spacing:0px">广州金融...</div>
<div class="t" style="left:979px;top:606px;width:110px;height:39px;line-height:39px;text-align:right;color:#555a66;font-weight:normal;font-size:14px;letter-spacing:0px">24,150.00</div>
<div class="t" style="left:1111px;top:606px;height:39px;line-height:39px;color:#555a66;font-weight:normal;font-size:14px;letter-spacing:0px">桐柏</div>
<div class="t" style="left:1191px;top:606px;height:39px;line-height:39px;color:#555a66;font-weight:normal;font-size:14px;letter-spacing:0px"></div>
<div class="t" style="left:1290px;top:606px;height:39px;line-height:39px;color:#555a66;font-weight:normal;font-size:14px;letter-spacing:0px">许煜</div>
<div class="t" style="left:1390px;top:606px;height:39px;line-height:39px;color:#555a66;font-weight:normal;font-size:14px;letter-spacing:0px">2025-04-28</div>
<div class="t" style="left:1478px;top:606px;width:101px;height:39px;line-height:39px;text-align:center;color:#c0c4cc;font-weight:normal;font-size:14px;letter-spacing:0px">修改</div>
<div class="a" style="left:247px;top:660px;width:14px;height:14px;border:1px solid #dcdfe6;border-radius:2px;background:#fff"></div>
<div class="t" style="left:280px;top:646px;width:60px;height:39px;line-height:39px;text-align:center;color:#555a66;font-weight:normal;font-size:14px;letter-spacing:0px">8</div>
<div class="a" style="left:360px;top:654px;width:61px;height:23px;background:#d4eedf"></div>
<div class="t" style="left:360px;top:654px;width:61px;height:23px;line-height:23px;text-align:center;color:#23a35a">已审批</div>
<div class="t" style="left:440px;top:646px;width:140px;height:39px;line-height:39px;text-align:center;color:#3a7bea;font-weight:normal;font-size:14px;letter-spacing:0px">CK20250428116</div>
<div class="t" style="left:592px;top:646px;height:39px;line-height:39px;color:#555a66;font-weight:normal;font-size:14px;letter-spacing:0px">多孔砖,钢筋</div>
<div class="t" style="left:693px;top:646px;height:39px;line-height:39px;color:#555a66;font-weight:normal;font-size:14px;letter-spacing:0px">领用出库</div>
<div class="t" style="left:793px;top:646px;height:39px;line-height:39px;color:#555a66;font-weight:normal;font-size:14px;letter-spacing:0px">6号仓库</div>
<div class="t" style="left:892px;top:646px;height:39px;line-height:39px;color:#555a66;font-weight:normal;font-size:14px;letter-spacing:0px">桥梁施工...</div>
<div class="t" style="left:979px;top:646px;width:110px;height:39px;line-height:39px;text-align:right;color:#555a66;font-weight:normal;font-size:14px;letter-spacing:0px">2,550.00</div>
<div class="t" style="left:1111px;top:646px;height:39px;line-height:39px;color:#555a66;font-weight:normal;font-size:14px;letter-spacing:0px">1</div>
<div class="t" style="left:1191px;top:646px;height:39px;line-height:39px;color:#555a66;font-weight:normal;font-size:14px;letter-spacing:0px"></div>
<div class="t" style="left:1290px;top:646px;height:39px;line-height:39px;color:#555a66;font-weight:normal;font-size:14px;letter-spacing:0px">陈佳琦</div>
<div class="t" style="left:1390px;top:646px;height:39px;line-height:39px;color:#555a66;font-weight:normal;font-size:14px;letter-spacing:0px">2025-04-30</div>
<div class="t" style="left:1478px;top:646px;width:101px;height:39px;line-height:39px;text-align:center;color:#c0c4cc;font-weight:normal;font-size:14px;letter-spacing:0px">修改</div>
<div class="a" style="left:247px;top:700px;width:14px;height:14px;border:1px solid #dcdfe6;border-radius:2px;background:#fff"></div>
<div class="t" style="left:280px;top:686px;width:60px;height:39px;line-height:39px;text-align:center;color:#555a66;font-weight:normal;font-size:14px;letter-spacing:0px">9</div>
<div class="a" style="left:360px;top:694px;width:61px;height:23px;background:#fdd9da"></div>
<div class="t" style="left:360px;top:694px;width:61px;height:23px;line-height:23px;text-align:center;color:#f0343a">未审批</div>
<div class="t" style="left:440px;top:686px;width:140px;height:39px;line-height:39px;text-align:center;color:#3a7bea;font-weight:normal;font-size:14px;letter-spacing:0px">CK20250319114</div>
<div class="t" style="left:592px;top:686px;height:39px;line-height:39px;color:#555a66;font-weight:normal;font-size:14px;letter-spacing:0px">钢筋,普通...</div>
<div class="t" style="left:693px;top:686px;height:39px;line-height:39px;color:#555a66;font-weight:normal;font-size:14px;letter-spacing:0px">领用出库</div>
<div class="t" style="left:793px;top:686px;height:39px;line-height:39px;color:#555a66;font-weight:normal;font-size:14px;letter-spacing:0px">6号仓库</div>
<div class="t" style="left:892px;top:686px;height:39px;line-height:39px;color:#555a66;font-weight:normal;font-size:14px;letter-spacing:0px">给水施工...</div>
<div class="t" style="left:979px;top:686px;width:110px;height:39px;line-height:39px;text-align:right;color:#555a66;font-weight:normal;font-size:14px;letter-spacing:0px">78,160.00</div>
<div class="t" style="left:1111px;top:686px;height:39px;line-height:39px;color:#555a66;font-weight:normal;font-size:14px;letter-spacing:0px">张杰</div>
<div class="t" style="left:1191px;top:686px;height:39px;line-height:39px;color:#555a66;font-weight:normal;font-size:14px;letter-spacing:0px"></div>
<div class="t" style="left:1290px;top:686px;height:39px;line-height:39px;color:#555a66;font-weight:normal;font-size:14px;letter-spacing:0px">张杰</div>
<div class="t" style="left:1390px;top:686px;height:39px;line-height:39px;color:#555a66;font-weight:normal;font-size:14px;letter-spacing:0px">2025-03-08</div>
<div class="t" style="left:1478px;top:686px;width:101px;height:39px;line-height:39px;text-align:center;color:#f0343a;font-weight:normal;font-size:14px;letter-spacing:0px">修改</div>
<div class="a" style="left:247px;top:740px;width:14px;height:14px;border:1px solid #dcdfe6;border-radius:2px;background:#fff"></div>
<div class="t" style="left:280px;top:726px;width:60px;height:39px;line-height:39px;text-align:center;color:#555a66;font-weight:normal;font-size:14px;letter-spacing:0px">10</div>
<div class="a" style="left:360px;top:734px;width:61px;height:23px;background:#d4eedf"></div>
<div class="t" style="left:360px;top:734px;width:61px;height:23px;line-height:23px;text-align:center;color:#23a35a">已审批</div>
<div class="t" style="left:440px;top:726px;width:140px;height:39px;line-height:39px;text-align:center;color:#3a7bea;font-weight:normal;font-size:14px;letter-spacing:0px">CK20250225107</div>
<div class="t" style="left:592px;top:726px;height:39px;line-height:39px;color:#555a66;font-weight:normal;font-size:14px;letter-spacing:0px">多孔砖,木板</div>
<div class="t" style="left:693px;top:726px;height:39px;line-height:39px;color:#555a66;font-weight:normal;font-size:14px;letter-spacing:0px">领用出库</div>
<div class="t" style="left:793px;top:726px;height:39px;line-height:39px;color:#555a66;font-weight:normal;font-size:14px;letter-spacing:0px">6号仓库</div>
<div class="t" style="left:892px;top:726px;height:39px;line-height:39px;color:#555a66;font-weight:normal;font-size:14px;letter-spacing:0px">施工班组E</div>
<div class="t" style="left:979px;top:726px;width:110px;height:39px;line-height:39px;text-align:right;color:#555a66;font-weight:normal;font-size:14px;letter-spacing:0px">500.00</div>
<div class="t" style="left:1111px;top:726px;height:39px;line-height:39px;color:#555a66;font-weight:normal;font-size:14px;letter-spacing:0px">1</div>
<div class="t" style="left:1191px;top:726px;height:39px;line-height:39px;color:#555a66;font-weight:normal;font-size:14px;letter-spacing:0px">123456</div>
<div class="t" style="left:1290px;top:726px;height:39px;line-height:39px;color:#555a66;font-weight:normal;font-size:14px;letter-spacing:0px">555</div>
<div class="t" style="left:1390px;top:726px;height:39px;line-height:39px;color:#555a66;font-weight:normal;font-size:14px;letter-spacing:0px">2025-02-25</div>
<div class="t" style="left:1478px;top:726px;width:101px;height:39px;line-height:39px;text-align:center;color:#c0c4cc;font-weight:normal;font-size:14px;letter-spacing:0px">修改</div>
<div class="t" style="left:1097.5px;top:837.5px;height:28px;line-height:28px;font-size:13.5px;color:#606266">共 24 条</div>
<div class="a" style="left:1163px;top:838px;width:100px;height:28px;border:1px solid #dcdfe6;border-radius:3px"></div>
<div class="t" style="left:1183px;top:838px;height:28px;line-height:28px;color:#606266;font-size:13px">10条/页</div>
<svg style="left:1245px;top:846px" width="10" height="6" viewBox="0 0 10 6"><path d="M0.5 0.5 L5 5 L9.5 0.5" fill="none" stroke="#c0c4cc" stroke-width="1"/></svg>
<svg style="left:1288px;top:845px" width="8" height="12" viewBox="0 0 8 12"><path d="M7 1 L1.8 6 L7 11" fill="none" stroke="#c0c4cc" stroke-width="1.5"/></svg>
<div class="t" style="left:1316px;top:837px;width:30px;height:28px;line-height:28px;text-align:center;color:#409eff;font-weight:bold">1</div>
<div class="t" style="left:1352px;top:837px;width:30px;height:28px;line-height:28px;text-align:center;color:#303133;font-weight:bold">2</div>
<div class="t" style="left:1387px;top:837px;width:30px;height:28px;line-height:28px;text-align:center;color:#303133;font-weight:bold">3</div>
<svg style="left:1437px;top:845px" width="8" height="12" viewBox="0 0 8 12"><path d="M1 1 L6.2 6 L1 11" fill="none" stroke="#303133" stroke-width="1.5"/></svg>
<div class="t" style="left:1480px;top:837.5px;height:28px;line-height:28px;font-size:13.5px;color:#606266">前往</div>
<div class="a" style="left:1511px;top:837px;width:46px;height:28px;border:1px solid #dcdfe6;border-radius:3px"></div>
<div class="t" style="left:1511px;top:837px;width:46px;height:28px;line-height:28px;text-align:center;color:#606266">1</div>
<div class="t" style="left:1561.5px;top:837.5px;height:28px;line-height:28px;font-size:13px;color:#606266">页</div>
</body></html>
